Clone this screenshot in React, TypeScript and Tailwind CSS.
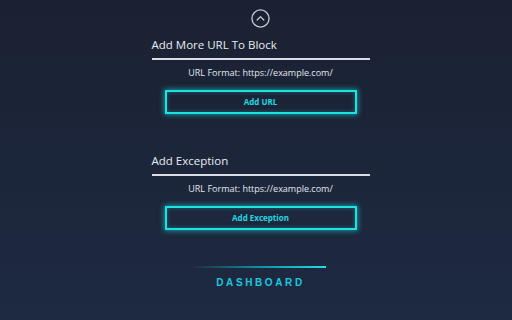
const font = { fontFamily: '"Open Sans", "Liberation Sans", sans-serif' };

function Section({ title, button, top }: { title: string; button: string; top: string }) {
  return (
    <section className={`flex flex-col ${top}`}>
      <h2 className="text-[11.5px] leading-[14px] text-[#e8ecf2] pb-[6px] border-b-2 border-[#d9dce2]">{title}</h2>
      <p className="mt-[7px] text-center text-[9px] leading-[12px] text-[#e3e7ee]">URL Format: https://example.com/</p>
      <button className="mt-[11px] mx-auto w-[192px] h-[24px] border-2 border-[#19e3e3] text-[#21d8e0] text-[8px] font-bold shadow-[0_0_5px_1px_rgba(25,227,227,0.55),inset_0_0_4px_rgba(25,227,227,0.35)]">
        {button}
      </button>
    </section>
  );
}

export default function App() {
  return (
    <main className="w-[512px] h-[320px] overflow-hidden bg-gradient-to-b from-[#1a2132] to-[#1e2a42] flex justify-center pl-[9px]" style={font}>
      <div className="w-[218px] flex flex-col">
        <div className="flex justify-center pt-[9px]">
          <svg width="19" height="19" viewBox="0 0 20 20" fill="none" stroke="#c9ccd3" strokeWidth="1.4">
            <circle cx="10" cy="10" r="9" />
            <path d="M6.5 11.5 L10 8 L13.5 11.5" strokeLinecap="round" strokeLinejoin="round" />
          </svg>
        </div>
        <Section title="Add More URL To Block" button="Add URL" top="mt-[10px]" />
        <Section title="Add Exception" button="Add Exception" top="mt-[40px]" />
        <div className="mt-[36px] flex flex-col items-center">
          <div className="w-[136px] h-[2px] -ml-[5px] bg-gradient-to-r from-transparent via-[#0f8fa0] to-[#1ee0ea]" />
          <div className="mt-[7px] text-[10px] font-bold tracking-[2.6px] text-[#19c8de]" style={{ fontFamily: '"Liberation Sans", sans-serif' }}>
            DASHBOARD
          </div>
        </div>
      </div>
    </main>
  );
}
